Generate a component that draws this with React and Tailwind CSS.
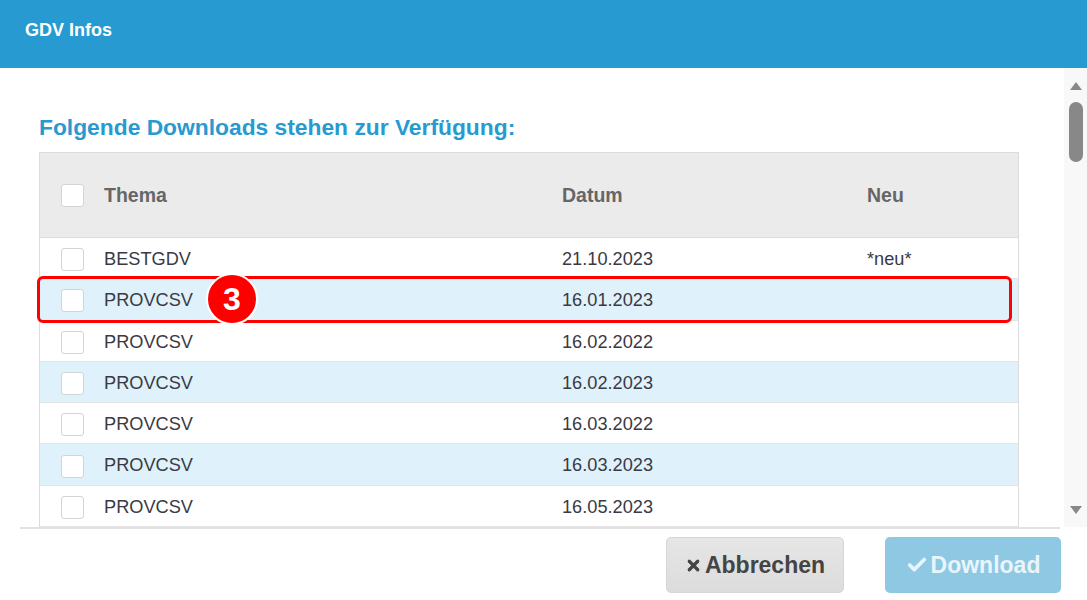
import { X, Check } from "lucide-react";

const rows = [
  { thema: "BESTGDV", datum: "21.10.2023", neu: "*neu*" },
  { thema: "PROVCSV", datum: "16.01.2023", neu: "" },
  { thema: "PROVCSV", datum: "16.02.2022", neu: "" },
  { thema: "PROVCSV", datum: "16.02.2023", neu: "" },
  { thema: "PROVCSV", datum: "16.03.2022", neu: "" },
  { thema: "PROVCSV", datum: "16.03.2023", neu: "" },
  { thema: "PROVCSV", datum: "16.05.2023", neu: "" },
];

function Box() {
  return <div className="w-[23px] h-[23px] rounded-[3px] border border-[#d4d4d4] bg-white" />;
}

export default function App() {
  return (
    <div
      className="w-[1087px] h-[600px] bg-white flex flex-col overflow-hidden"
      style={{ fontFamily: '"Liberation Sans", Arial, sans-serif' }}
    >
      <div className="h-[68px] shrink-0 bg-[#279ad2] flex items-center px-[25px] pb-[8px] text-white font-bold text-[18px]">
        GDV Infos
      </div>

      <div className="h-[459px] shrink-0 flex">
        <div className="flex-1 overflow-hidden pl-[39px] pr-[45px]">
          <h2 className="mt-[46px] text-[22.8px] leading-[26px] font-bold text-[#279ad2]">
            Folgende Downloads stehen zur Verfügung:
          </h2>
          <div className="relative mt-[12px] w-[980px] border-l border-r border-[#dcdcdc]">
            <div className="grid grid-cols-[64px_458px_305px_1fr] items-center h-[86px] bg-[#ebebeb] border-t border-b border-[#dcdcdc] text-[19.5px] font-bold text-[#666]">
              <div className="pl-[21px]"><Box /></div>
              <div className="pt-[2px]">Thema</div>
              <div className="pt-[2px]">Datum</div>
              <div className="pt-[2px]">Neu</div>
            </div>
            {rows.map((r, i) => (
              <div
                key={i}
                className={`grid grid-cols-[64px_458px_305px_1fr] items-center h-[41.3px] border-b border-[#e4e4e4] text-[18.2px] text-[#3a3a44] ${
                  i % 2 === 1 ? "bg-[#dff1fb]" : "bg-white"
                }`}
              >
                <div className="pl-[21px] pt-[3px]"><Box /></div>
                <div className="pt-[3px]">{r.thema}</div>
                <div className="pt-[3px]">{r.datum}</div>
                <div className="pt-[3px]">{r.neu}</div>
              </div>
            ))}
            <div className="absolute left-[-3px] top-[124px] w-[975px] h-[47px] border-[3px] border-[#f00] rounded-[6px]" />
            <div className="absolute left-[166px] top-[121px] w-[52px] h-[52px] rounded-full bg-[#f00] border-2 border-white flex items-center justify-center text-white font-bold text-[32px]">
              3
            </div>
          </div>
        </div>
        <div className="w-[23px] shrink-0 bg-[#f8f8f8] flex flex-col items-center pt-[14px]">
          <div className="w-0 h-0 border-l-[6px] border-r-[6px] border-b-[8px] border-l-transparent border-r-transparent border-b-[#888]" />
          <div className="mt-[12px] w-[14px] h-[60px] rounded-full bg-[#888]" />
          <div className="mt-auto mb-[13px] w-0 h-0 border-l-[6px] border-r-[6px] border-t-[8px] border-l-transparent border-r-transparent border-t-[#888]" />
        </div>
      </div>

      <div className="ml-[20px] w-[1040px] border-t-2 border-[#e2e2e2]" />
      <div className="flex justify-end gap-[41px] pt-[8px] pr-[26px]">
        <button className="w-[178px] h-[56px] rounded-[5px] bg-gradient-to-b from-[#e6e6e6] to-[#dcdcdc] border border-[#d6d6d6] flex items-center justify-center gap-[3px] text-[23px] font-bold text-[#444]">
          <X className="w-[17px] h-[17px]" strokeWidth={4.5} />
          Abbrechen
        </button>
        <button className="w-[176px] h-[56px] rounded-[5px] bg-[#8fc8e3] flex items-center justify-center gap-[3px] text-[23px] font-bold text-[#e9f5fb]">
          <Check className="w-[22px] h-[22px]" strokeWidth={4} />
          Download
        </button>
      </div>
    </div>
  );
}
